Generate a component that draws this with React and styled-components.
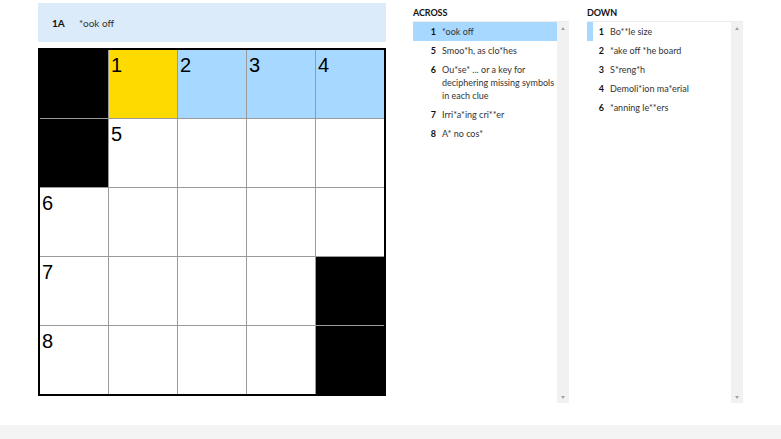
import React from "react";
import styled, { createGlobalStyle } from "styled-components";

const Global = createGlobalStyle`
  html, body { margin: 0; padding: 0; background: #fff; }
  body { font-family: Lato, "Liberation Sans", sans-serif; color: #222; }
`;

const Page = styled.div`
  width: 781px;
  height: 439px;
  display: flex;
  flex-direction: column;
  overflow: hidden;
`;

const Main = styled.div`
  flex: 1;
  display: flex;
  padding: 3px 0 0 38px;
`;

const Footer = styled.div`
  height: 14px;
  background: #f4f4f4;
`;

const LeftCol = styled.div`
  width: 348px;
  display: flex;
  flex-direction: column;
  gap: 6px;
  margin-right: 27px;
`;

const ClueBar = styled.div`
  height: 39px;
  background: #dcebfa;
  display: flex;
  align-items: center;
  padding-left: 14px;
  font-size: 10px;
  color: #333;
`;

const ClueBarNum = styled.span`
  font-weight: 700;
  width: 27px;
  color: #111;
`;

const Grid = styled.div`
  display: grid;
  grid-template-columns: repeat(5, 68px);
  grid-template-rows: repeat(5, 68px);
  gap: 1px;
  background: #9a9a9a;
  border: 2px solid #000;
  width: max-content;
`;

const Cell = styled.div`
  background: ${(p) => p.$bg};
  font-family: "Liberation Sans", Arial, sans-serif;
  font-size: 20px;
  line-height: 23px;
  padding: 4px 0 0 2px;
  color: #000;
`;

const ListCol = styled.div`
  width: 156px;
  display: flex;
  flex-direction: column;
  margin-right: ${(p) => p.$mr || 0}px;
`;

const ListHeader = styled.div`
  height: 18px;
  display: flex;
  align-items: center;
  font-size: 9px;
  font-weight: 700;
  color: #111;
  letter-spacing: -0.1px;
`;

const ListBox = styled.div`
  height: 381px;
  display: flex;
  border-top: 1px solid #ececec;
`;

const List = styled.div`
  flex: 1;
  display: flex;
  flex-direction: column;
`;

const Row = styled.div`
  display: flex;
  padding: 3px 0;
  background: ${(p) => (p.$active ? "#a7d8ff" : "transparent")};
  border-left: 6px solid ${(p) => (p.$stripe ? "#a7d8ff" : "transparent")};
  font-size: 9px;
  line-height: 13px;
  color: #333;
`;

const RowNum = styled.span`
  width: ${(p) => p.$w}px;
  flex: none;
  text-align: right;
  padding-right: 6px;
  box-sizing: border-box;
  font-weight: 700;
  color: #111;
`;

const RowText = styled.span`
  flex: 1;
  padding-right: 2px;
`;

const Scrollbar = styled.div`
  width: 12px;
  background: #f1f1f1;
  display: flex;
  flex-direction: column;
  justify-content: space-between;
  align-items: center;
  padding: 5px 0 4px;
`;

const Arrow = styled.span`
  width: 0;
  height: 0;
  border-left: 2.5px solid transparent;
  border-right: 2.5px solid transparent;
  ${(p) =>
    p.$down
      ? "border-top: 3px solid #a3a3a3;"
      : "border-bottom: 3px solid #a3a3a3;"}
`;

const B = "#000";
const W = "#fff";
const Y = "#ffda00";
const L = "#a7d8ff";

const cells = [
  [B, ""], [Y, "1"], [L, "2"], [L, "3"], [L, "4"],
  [B, ""], [W, "5"], [W, ""], [W, ""], [W, ""],
  [W, "6"], [W, ""], [W, ""], [W, ""], [W, ""],
  [W, "7"], [W, ""], [W, ""], [W, ""], [B, ""],
  [W, "8"], [W, ""], [W, ""], [W, ""], [B, ""],
];

const across = [
  ["1", "*ook off"],
  ["5", "Smoo*h, as clo*hes"],
  ["6", "Ou*se* ... or a key for deciphering missing symbols in each clue"],
  ["7", "Irri*a*ing cri**er"],
  ["8", "A* no cos*"],
];

const down = [
  ["1", "Bo**le size"],
  ["2", "*ake off *he board"],
  ["3", "S*reng*h"],
  ["4", "Demoli*ion ma*erial"],
  ["6", "*anning le**ers"],
];

function ClueList({ title, clues, mode, mr }) {
  return (
    <ListCol $mr={mr}>
      <ListHeader>{title}</ListHeader>
      <ListBox>
        <List>
          {clues.map(([n, t], i) => (
            <Row
              key={n}
              $active={mode === "active" && i === 0}
              $stripe={mode === "stripe" && i === 0}
            >
              <RowNum $w={mode === "stripe" ? 17 : 23}>{n}</RowNum>
              <RowText>{t}</RowText>
            </Row>
          ))}
        </List>
        <Scrollbar>
          <Arrow />
          <Arrow $down />
        </Scrollbar>
      </ListBox>
    </ListCol>
  );
}

export default function App() {
  return (
    <Page>
      <Global />
      <Main>
        <LeftCol>
          <ClueBar>
            <ClueBarNum>1A</ClueBarNum>
            <span>*ook off</span>
          </ClueBar>
          <Grid>
            {cells.map(([bg, n], i) => (
              <Cell key={i} $bg={bg}>{n}</Cell>
            ))}
          </Grid>
        </LeftCol>
        <ClueList title="ACROSS" clues={across} mode="active" mr={18} />
        <ClueList title="DOWN" clues={down} mode="stripe" />
      </Main>
      <Footer />
    </Page>
  );
}
